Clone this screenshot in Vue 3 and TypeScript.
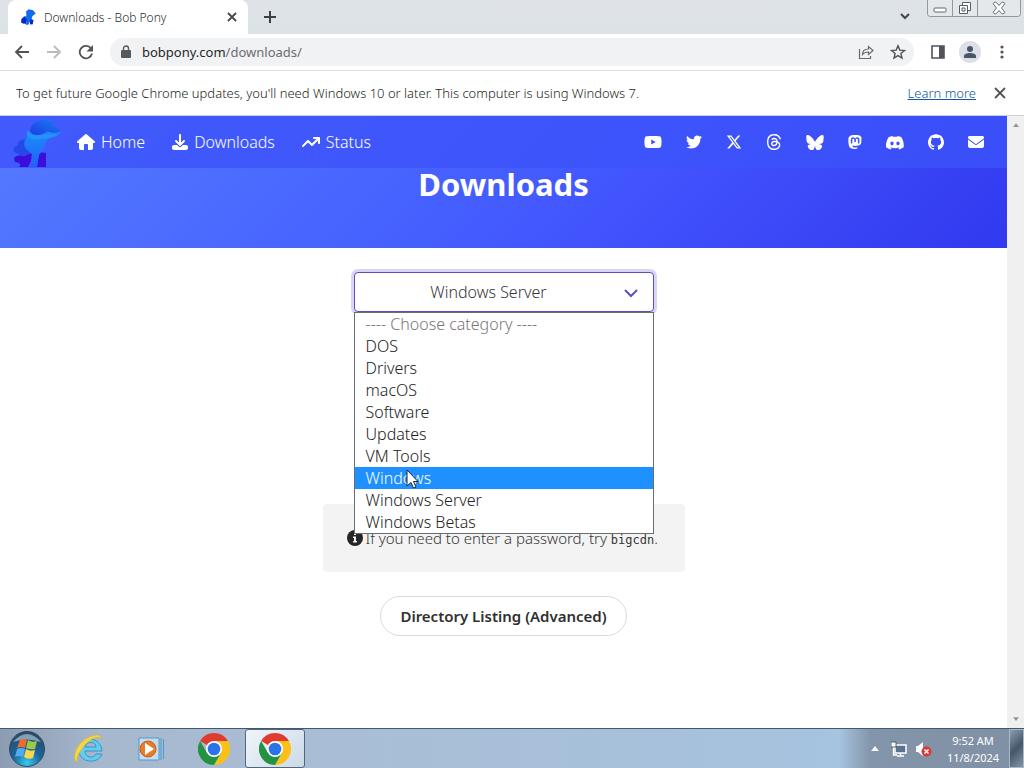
<script setup lang="ts">
import { ref } from 'vue'

interface Icon { name: string; box: string; w: number; d: string }

const navLinks: Icon[] = [
  { name: 'Home', box: '0 0 576 512', w: 18, d: 'M575.8 255.5c0 18-15 32.1-32 32.1h-32l.7 160.2c.2 35.5-28.5 64.3-64 64.3H352V352c0-17.700-14.300-32-32-32h-64c-17.700 0-32 14.300-32 32v160h-96c-35.300 0-64-28.700-64-64V287.600H32c-18 0-32-14-32-32.100 0-9 3-17 10-24L266.400 8c7-7 15-8 22-8s15 2 21 7l255.400 224.500c8 7 12 15 11 24z' },
  { name: 'Downloads', box: '0 0 512 512', w: 16, d: 'M288 32c0-17.700-14.300-32-32-32s-32 14.300-32 32v242.700l-73.400-73.400c-12.500-12.500-32.800-12.500-45.300 0s-12.500 32.800 0 45.300l128 128c12.500 12.500 32.800 12.500 45.300 0l128-128c12.500-12.500 12.500-32.800 0-45.300s-32.800-12.500-45.300 0L288 274.700V32zM64 352c-35.300 0-64 28.700-64 64v32c0 35.300 28.700 64 64 64h384c35.300 0 64-28.700 64-64v-32c0-35.300-28.700-64-64-64H346.500l-45.300 45.300c-25 25-65.500 25-90.500 0L165.500 352H64z' },
  { name: 'Status', box: '0 0 576 512', w: 18, d: 'M384 160c-17.700 0-32-14.300-32-32s14.300-32 32-32h160c17.700 0 32 14.300 32 32v160c0 17.700-14.300 32-32 32s-32-14.300-32-32v-82.700L342.600 374.600c-12.500 12.500-32.800 12.500-45.300 0L192 269.300 54.600 406.600c-12.500 12.500-32.800 12.500-45.300 0s-12.500-32.800 0-45.300l160-160c12.500-12.500 32.800-12.500 45.300 0L320 306.700 466.700 160H384z' },
]

const social: Icon[] = [
  { name: 'YouTube', box: '0 0 576 512', w: 18, d: 'M549.655 124.083c-6.281-23.650-24.787-42.276-48.284-48.597C458.781 64 288 64 288 64S117.220 64 74.629 75.486c-23.497 6.322-42.003 24.947-48.284 48.597-11.412 42.867-11.412 132.305-11.412 132.305s0 89.438 11.412 132.305c6.281 23.650 24.787 41.500 48.284 47.821C117.220 448 288 448 288 448s170.780 0 213.371-11.486c23.497-6.321 42.003-24.171 48.284-47.821 11.412-42.867 11.412-132.305 11.412-132.305s0-89.438-11.412-132.305zm-317.510 213.508V175.185l142.739 81.205-142.739 81.201z' },
  { name: 'Twitter', box: '0 0 512 512', w: 16, d: 'M459.370 151.716c.325 4.548.325 9.097.325 13.645 0 138.720-105.583 298.558-298.558 298.558-59.452 0-114.680-17.219-161.137-47.106 8.447.974 16.568 1.299 25.340 1.299 49.055 0 94.213-16.568 130.274-44.832-46.132-.975-84.792-31.188-98.112-72.772 6.498.974 12.995 1.624 19.818 1.624 9.421 0 18.843-1.300 27.614-3.573-48.081-9.747-84.143-51.980-84.143-102.985v-1.299c13.969 7.797 30.214 12.670 47.431 13.319-28.264-18.843-46.781-51.005-46.781-87.391 0-19.492 5.197-37.360 14.294-52.954 51.655 63.675 129.300 105.258 216.365 109.807-1.624-7.797-2.599-15.918-2.599-24.040 0-57.828 46.782-104.934 104.934-104.934 30.213 0 57.502 12.670 76.670 33.137 23.715-4.548 46.456-13.320 66.599-25.340-7.798 24.366-24.366 44.833-46.132 57.827 21.117-2.273 41.584-8.122 60.426-16.243-14.292 20.791-32.161 39.308-52.628 54.253z' },
  { name: 'X', box: '0 0 512 512', w: 16, d: 'M389.200 48h70.600L305.600 224.200 487 464H345L233.700 318.600 106.500 464H35.800L200.700 275.500 26.800 48H172.400L272.900 180.900 389.200 48zM364.400 421.800h39.100L151.100 88h-42L364.400 421.800z' },
  { name: 'Threads', box: '0 0 24 24', w: 16, d: 'M12.186 24h-.007c-3.581-.024-6.334-1.205-8.184-3.509C2.350 18.440 1.500 15.586 1.472 12.010v-.017c.030-3.579.879-6.430 2.525-8.482C5.845 1.205 8.600.024 12.180 0h.014c2.746.020 5.043.725 6.826 2.098 1.677 1.290 2.858 3.130 3.509 5.467l-2.040.569c-1.104-3.960-3.898-5.984-8.304-6.015-2.910.022-5.110.936-6.540 2.717C4.307 6.504 3.616 8.914 3.589 12c.027 3.086.718 5.496 2.057 7.164 1.430 1.783 3.631 2.698 6.540 2.717 2.623-.020 4.358-.631 5.800-2.045 1.647-1.613 1.618-3.593 1.090-4.798-.310-.710-.873-1.300-1.634-1.750-.192 1.352-.622 2.446-1.284 3.272-.886 1.102-2.140 1.704-3.730 1.790-1.202.065-2.361-.218-3.259-.801-1.063-.689-1.685-1.740-1.752-2.964-.065-1.190.408-2.285 1.330-3.082.880-.760 2.119-1.207 3.583-1.291a13.853 13.853 0 0 1 3.020.142c-.126-.742-.375-1.332-.750-1.757-.513-.586-1.308-.883-2.359-.890h-.029c-.844 0-1.992.232-2.721 1.320L7.734 7.847c.980-1.454 2.568-2.256 4.478-2.256h.044c3.194.020 5.097 1.975 5.287 5.388.108.046.216.094.321.142 1.490.700 2.580 1.761 3.154 3.070.797 1.820.871 4.790-1.548 7.158-1.850 1.810-4.094 2.628-7.277 2.650Zm1.003-11.690c-.242 0-.487.007-.739.021-1.836.103-2.980.946-2.916 2.143.067 1.256 1.452 1.839 2.784 1.767 1.224-.065 2.818-.543 3.086-3.710a10.500 10.500 0 0 0-2.215-.221z' },
  { name: 'Bluesky', box: '0 0 24 22', w: 18, d: 'M12 10.800c-1.087-2.114-4.046-6.053-6.798-7.995C2.566.944 1.561 1.266.902 1.565.139 1.908 0 3.080 0 3.768c0 .690.378 5.650.624 6.479.815 2.736 3.713 3.660 6.383 3.364-3.912.580-7.387 2.005-2.830 7.078 5.013 5.190 6.870-1.113 7.823-4.308.953 3.195 2.050 9.271 7.733 4.308 4.267-4.308 1.172-6.498-2.740-7.078 2.670.297 5.568-.628 6.383-3.364.246-.828.624-5.790.624-6.478 0-.690-.139-1.861-.902-2.206-.659-.298-1.664-.620-4.300 1.240C16.046 4.748 13.087 8.687 12 10.800Z' },
  { name: 'Mastodon', box: '0 0 24 24', w: 14, d: 'M23.268 5.313c-.350-2.578-2.617-4.610-5.304-5.004C17.510.242 15.792 0 11.813 0h-.030c-3.980 0-4.835.242-5.288.309C3.882.692 1.496 2.518.917 5.127.640 6.412.610 7.837.661 9.143c.074 1.874.088 3.745.260 5.611.118 1.240.325 2.470.620 3.680.550 2.237 2.777 4.098 4.960 4.857 2.336.792 4.849.923 7.256.380.265-.061.527-.132.786-.213.585-.184 1.270-.390 1.774-.753v-1.852a20.282 20.282 0 0 1-4.709.545c-2.730 0-3.463-1.284-3.674-1.818a5.593 5.593 0 0 1-.319-1.433 18.990 18.990 0 0 0 4.632.544c1.565-.012 4.500-.300 5.520-.580 2.435-.464 4.753-1.920 4.989-5.604.141-3.028.120-5.500.512-7.194zm-3.748 9.195h-2.561V8.290c0-1.309-.550-1.976-1.670-1.976-1.230 0-1.846.790-1.846 2.350v3.403h-2.546V8.663c0-1.560-.617-2.350-1.848-2.350-1.112 0-1.668.668-1.670 1.977v6.218H4.822V8.102c0-1.310.337-2.350 1.011-3.120.696-.770 1.608-1.164 2.740-1.164 1.311 0 2.302.500 2.962 1.498l.638 1.060.638-1.060c.660-.999 1.650-1.498 2.960-1.498 1.130 0 2.043.395 2.740 1.164.675.770 1.012 1.810 1.012 3.120z' },
  { name: 'Discord', box: '0 1 24 20', w: 18, d: 'M20.317 4.370a19.791 19.791 0 0 0-4.885-1.515c-.210.375-.444.865-.608 1.250a18.270 18.270 0 0 0-5.487 0c-.164-.393-.406-.875-.618-1.250A19.736 19.736 0 0 0 3.677 4.370C.533 9.046-.319 13.580.099 18.058a19.900 19.900 0 0 0 5.993 3.030c.462-.630.874-1.295 1.226-1.994a13.100 13.100 0 0 1-1.872-.892l.372-.292c3.928 1.793 8.180 1.793 12.062 0l.373.292c-.598.350-1.220.645-1.873.892.360.698.772 1.362 1.225 1.993a19.839 19.839 0 0 0 6.002-3.030c.500-5.177-.838-9.674-3.290-13.687zM8.020 15.331c-1.182 0-2.157-1.086-2.157-2.419s.956-2.419 2.157-2.419c1.210 0 2.176 1.095 2.157 2.419 0 1.333-.956 2.419-2.157 2.419zm7.975 0c-1.183 0-2.157-1.086-2.157-2.419s.955-2.419 2.157-2.419c1.210 0 2.176 1.095 2.157 2.419 0 1.333-.946 2.419-2.157 2.419z' },
  { name: 'GitHub', box: '0 0 24 24', w: 16, d: 'M12 .297c-6.630 0-12 5.373-12 12 0 5.303 3.438 9.800 8.205 11.385.600.113.820-.258.820-.577 0-.285-.010-1.040-.015-2.040-3.338.724-4.042-1.610-4.042-1.610C4.422 18.070 3.633 17.700 3.633 17.700c-1.087-.744.084-.729.084-.729 1.205.084 1.838 1.236 1.838 1.236 1.070 1.835 2.809 1.305 3.495.998.108-.776.417-1.305.760-1.605-2.665-.300-5.466-1.332-5.466-5.930 0-1.310.465-2.380 1.235-3.220-.135-.303-.540-1.523.105-3.176 0 0 1.005-.322 3.300 1.230.960-.267 1.980-.399 3-.405 1.020.006 2.040.138 3 .405 2.280-1.552 3.285-1.230 3.285-1.230.645 1.653.240 2.873.120 3.176.765.840 1.230 1.910 1.230 3.220 0 4.610-2.805 5.625-5.475 5.920.420.360.810 1.096.810 2.220 0 1.606-.015 2.896-.015 3.286 0 .315.210.690.825.570C20.565 22.092 24 17.592 24 12.297c0-6.627-5.373-12-12-12' },
  { name: 'Email', box: '0 0 512 512', w: 16, d: 'M48 64C21.500 64 0 85.500 0 112c0 15.100 7.100 29.300 19.200 38.400l217.600 163.200c11.400 8.500 27 8.500 38.400 0l217.600-163.200c12.100-9.100 19.200-23.300 19.200-38.400 0-26.500-21.500-48-48-48H48zM0 176v208c0 35.300 28.700 64 64 64h384c35.300 0 64-28.700 64-64V176L294.400 339.200c-22.800 17.100-54 17.100-76.800 0L0 176z' },
]

const categories = ['---- Choose category ----', 'DOS', 'Drivers', 'macOS', 'Software', 'Updates', 'VM Tools', 'Windows', 'Windows Server', 'Windows Betas']
const selected = ref('Windows Server')
const active = ref('Windows')
</script>

<template>
  <div class="desktop">
    <header class="tabstrip">
      <div class="tab">
        <svg class="favicon" viewBox="0 0 48 50" aria-hidden="true"><path fill="#126be8" d="M18 8 26 1 40 4 48 14 38 22 35 32 41 34 39 48H31L30 39 25 49H17L19 40 10 46 2 41 9 37 5 30 12 23 19 23Z" /><path fill="#0928cf" d="M3 31 14 25 20 33 17 47 3 43ZM31 31 41 35 38 48H30Z" /></svg>
        <span class="tab-title">Downloads - Bob Pony</span>
        <button class="plain" aria-label="Close tab"><svg width="10" height="10" viewBox="0 0 10 10"><path d="M1 1 9 9M9 1 1 9" stroke="#45484c" stroke-width="1.800" /></svg></button>
      </div>
      <button class="plain new-tab" aria-label="New tab"><svg width="14" height="14" viewBox="0 0 14 14"><path d="M7 1V13M1 7H13" stroke="#3c4043" stroke-width="2" /></svg></button>
      <button class="plain tab-search" aria-label="Search tabs"><svg width="12" height="8" viewBox="0 0 12 8"><path d="M2 1 6 5 10 1" fill="none" stroke="#43474b" stroke-width="2" /></svg></button>
      <div class="window-buttons">
        <button aria-label="Minimize"><svg width="14" height="14" viewBox="0 0 14 14"><rect x="1" y="7" width="12" height="4" rx="1" fill="#fff" stroke="#646a70" /></svg></button>
        <button aria-label="Restore"><svg width="14" height="14" viewBox="0 0 14 14"><path d="M4.500 1.500h8v8h-8z" fill="#fff" stroke="#565c62" /><path d="M1.500 4.500h8v8h-8zM4 7h3v3H4z" fill="#fff" stroke="#565c62" /></svg></button>
        <button class="close" aria-label="Close"><svg width="14" height="14" viewBox="0 0 14 14"><path d="M1 2.500 3 1 4.500 1.500 7 4.500 9.500 1.500 11 1 13 2.500 9.500 7 13 11.500 11 13 9.500 12.500 7 9.500 4.500 12.500 3 13 1 11.500 4.500 7Z" fill="#fff" stroke="#6a7076" /></svg></button>
      </div>
    </header>

    <div class="toolbar">
      <button class="plain" aria-label="Back"><svg width="16" height="16" viewBox="0 0 16 16"><path d="M15 8H2M8 2 2 8l6 6" fill="none" stroke="#505357" stroke-width="1.800" /></svg></button>
      <button class="plain" aria-label="Forward"><svg width="16" height="16" viewBox="0 0 16 16"><path d="M1 8H14M8 2l6 6-6 6" fill="none" stroke="#b9bbbe" stroke-width="1.800" /></svg></button>
      <button class="plain" aria-label="Reload"><svg width="16" height="16" viewBox="0 0 16 16"><path d="M13 4.500A6.200 6.200 0 1 0 14 9.500" fill="none" stroke="#505357" stroke-width="1.800" /><path d="M15 1v6.500H8.500Z" fill="#505357" /></svg></button>
      <div class="omnibox">
        <svg width="10" height="14" viewBox="0 0 10 14" aria-hidden="true"><path d="M2.500 6V3.500a2.500 2.500 0 0 1 5 0V6" fill="none" stroke="#55585c" stroke-width="1.400" /><rect y="5" width="10" height="8" rx="1" fill="#55585c" /></svg>
        <a class="url" href="#">bobpony.com<span>/downloads/</span></a>
        <button class="plain" aria-label="Share"><svg width="16" height="16" viewBox="0 0 16 16"><path d="M1.500 5v9.500h11V12M4.500 10.500c0-3.500 2-5.500 6-5.500V2.500L15 6.500l-4.500 4V8C8 8 6 8.500 4.500 10.500Z" fill="none" stroke="#66696d" stroke-width="1.200" /></svg></button>
        <button class="plain" aria-label="Bookmark"><svg width="16" height="16" viewBox="0 0 16 16"><path d="m8 1.800 1.800 4.300 4.700.4-3.600 3 1.100 4.600L8 11.600l-4 2.500 1.100-4.600-3.600-3 4.700-.4Z" fill="none" stroke="#505357" stroke-width="1.400" /></svg></button>
      </div>
      <button class="plain" aria-label="Side panel"><svg width="16" height="14" viewBox="0 0 16 14"><path d="M2 1h12v12H2z" fill="none" stroke="#505357" stroke-width="1.600" /><path d="M9 1h5v12H9z" fill="#505357" /></svg></button>
      <button class="plain profile" aria-label="Profile"><svg width="14" height="14" viewBox="0 0 14 14"><circle cx="7" cy="4" r="3" fill="#4c5469" /><path d="M1 13v-2c0-2 3-3 6-3s6 1 6 3v2Z" fill="#4c5469" /></svg></button>
      <button class="plain" aria-label="Menu"><svg width="4" height="14" viewBox="0 0 4 14"><g fill="#505357"><circle cx="2" cy="2" r="1.600" /><circle cx="2" cy="7" r="1.600" /><circle cx="2" cy="12" r="1.600" /></g></svg></button>
    </div>

    <div class="infobar">
      <span>To get future Google Chrome updates, you'll need Windows 10 or later. This computer is using Windows 7.</span>
      <a href="#">Learn more</a>
      <button class="plain" aria-label="Dismiss"><svg width="12" height="12" viewBox="0 0 12 12"><path d="M1 1 11 11M11 1 1 11" stroke="#505357" stroke-width="1.800" /></svg></button>
    </div>

    <div class="viewport">
      <main class="page">
        <section class="hero">
          <nav class="nav">
            <a class="logo" href="#" aria-label="Bob Pony">
              <svg viewBox="0 0 50 50" width="50" height="50">
                <defs>
                  <linearGradient id="mane" x1="0" x2="1" y1="1" y2="0"><stop offset="0" stop-color="#1a3fe4" /><stop offset="1" stop-color="#1c7cf4" /></linearGradient>
                  <linearGradient id="body" x1="0" x2="0" y1="0" y2="1"><stop offset="0" stop-color="#1c8ef8" /><stop offset="1" stop-color="#1d62f6" /></linearGradient>
                </defs>
                <path fill="#2448ea" d="M14 22Q5 23 6 28 0 30 2 35L9 38 18 38 22 30Z" />
                <path fill="#3a0fdc" d="M2 41Q5 37 12 39L20 36 19 44 16 50H7Q11 46 3 45ZM27 35 34 36 34 50H25Z" />
                <path fill="url(#body)" d="M15 14Q24 20 35 15L49 15Q46 20 39 20 34 22 33 27 31 34 27 38L25 50H19L21 38 15 33Q9 28 15 20Z" />
                <path fill="url(#mane)" d="M18 13Q20 6 27 4 36 0 42 4L41 9Q46 11 49 14 42 18 36 14 28 20 20 17Z" />
                <path fill="#2b9dff" opacity=".5" d="M15 13Q20 20 30 18 37 17 46 18 38 22 30 22 20 24 15 19Z" />
              </svg>
            </a>
            <a v-for="l in navLinks" :key="l.name" class="nav-link" href="#">
              <svg :width="l.w" height="16" :viewBox="l.box" aria-hidden="true"><path :d="l.d" fill="currentColor" /></svg>{{ l.name }}
            </a>
            <div class="social">
              <a v-for="s in social" :key="s.name" href="#" :aria-label="s.name">
                <svg :width="s.w" height="16" :viewBox="s.box"><path :d="s.d" fill="currentColor" /></svg>
              </a>
            </div>
          </nav>
          <h1>Downloads</h1>
        </section>

        <section class="content">
          <div class="picker">
            <select v-model="selected" aria-label="Category">
              <option v-for="c in categories" :key="c">{{ c }}</option>
            </select>
            <svg class="chevron" width="14" height="10" viewBox="0 0 14 10" aria-hidden="true"><path d="M1 2 7 8 13 2" fill="none" stroke="#5a50c0" stroke-width="2" /></svg>
            <ul class="options" role="listbox" aria-label="Category choices">
              <li v-for="(c, i) in categories" :key="c" role="option" :aria-selected="c === selected" :class="{ active: c === active, muted: i === 0 }" @click="selected = c" @mouseenter="active = c">
                {{ c }}
                <svg v-if="c === 'Windows'" class="cursor" width="13" height="20" viewBox="0 0 13 20" aria-hidden="true"><path d="M1 1V17L5 13.500 7.500 19 10 18 7.500 12.500H12Z" fill="#fff" stroke="#1b2733" /></svg>
              </li>
            </ul>
          </div>
          <p class="note">
            <svg width="16" height="16" viewBox="0 0 16 16" aria-hidden="true"><circle cx="8" cy="8" r="8" fill="#262626" /><path d="M7 3h2v2H7zM6 6.500h3V11h1v1.500H6V11h1V8H6z" fill="#f4f4f4" /></svg>
            <span>If you need to enter a password, try <code>bigcdn</code>.</span>
          </p>
          <a class="directory" href="#">Directory Listing (Advanced)</a>
        </section>
      </main>
      <div class="scrollbar" aria-hidden="true">
        <svg width="6" height="4" viewBox="0 0 8 5"><path d="M0 5 4 0 8 5Z" fill="#969696" /></svg>
        <svg width="6" height="4" viewBox="0 0 8 5"><path d="M0 0 4 5 8 0Z" fill="#969696" /></svg>
      </div>
    </div>

    <footer class="taskbar">
      <button class="task" aria-label="Start">
        <svg width="38" height="38" viewBox="0 0 38 38">
          <defs>
            <radialGradient id="orb" cx=".5" cy=".9" r=".9"><stop offset="0" stop-color="#35cbee" /><stop offset=".45" stop-color="#1a659a" /><stop offset="1" stop-color="#284866" /></radialGradient>
          </defs>
          <circle cx="19" cy="19" r="17.500" fill="url(#orb)" stroke="#344b63" />
          <path d="M5 12Q19-4 33 12 19 7 5 12Z" fill="#fff" opacity=".45" />
          <path d="M12 10Q15 8 19 10L17 18Q13 16 9 18Z" fill="#f06a2d" />
          <path d="M20 10Q24 13 29 11L27 19Q22 20 18 18Z" fill="#9acb43" />
          <path d="M9 19Q13 17 17 19L15 27Q11 25 7 27Z" fill="#55a9ed" />
          <path d="M18 19Q22 22 27 20L25 28Q20 30 16 27Z" fill="#ffd550" />
        </svg>
      </button>
      <button class="task" aria-label="Internet Explorer">
        <svg width="34" height="34" viewBox="0 0 34 34">
          <path d="M30 19H13c0 7 9 8 11 3h6c-3 10-22 10-23-3C7 4 29 3 30 19ZM13 15h11c0-6-10-6-11 0Z" fill="#62cdf2" stroke="#2689bd" stroke-width=".8" fill-rule="evenodd" />
          <path d="M30 7C29-1 12 4 5 16 1 24 2 30 6 30 4 27 6 23 10 17 15 9 26 2 30 7Z" fill="#f3d647" stroke="#d3af2b" stroke-width=".6" />
        </svg>
      </button>
      <button class="task" aria-label="Media Player">
        <svg width="28" height="26" viewBox="0 0 28 26">
          <path d="M2 2H22V24H2Z" fill="#c4ddf1" stroke="#4e9bc8" />
          <path d="M24 2V24M26.500 3V23" stroke="#4e9bc8" />
          <circle cx="11" cy="13" r="8" fill="#ea7b27" stroke="#ca5f20" /><path d="M8 7 17 13 8 19Z" fill="#fff" />
        </svg>
      </button>
      <button v-for="n in 2" :key="n" class="task" :class="{ running: n === 2 }" :aria-label="n === 1 ? 'Google Chrome' : 'Downloads - Bob Pony'">
        <svg width="32" height="32" viewBox="0 0 48 48">
          <path d="M24 24 3.215 12A24 24 0 0 1 44.785 12L44.780 12H24Z" fill="#df3b30" />
          <path d="M24 12H44.785A24 24 0 0 1 24 48L34.392 30Z" fill="#fbc116" />
          <path d="M34.392 30 24 48A24 24 0 0 1 3.215 12L13.608 30Z" fill="#229342" />
          <circle cx="24" cy="24" r="12" fill="#fff" /><circle cx="24" cy="24" r="9.500" fill="#2b73e8" />
        </svg>
      </button>
      <div class="tray">
        <button class="plain" aria-label="Show hidden icons"><svg width="8" height="5" viewBox="0 0 8 5"><path d="M0 5 4 0 8 5Z" fill="#f4f7fa" /></svg></button>
        <button class="plain" aria-label="Network"><svg width="16" height="16" viewBox="0 0 16 16"><path d="M4 4H15V12H4Z" fill="#58738b" stroke="#fff" stroke-width="1.500" /><path d="M6 15H13M9.500 12V15M2.500 6V14H6" stroke="#fff" stroke-width="1.300" fill="none" /><path d="M0 1H5V6H0Z" fill="#fff" stroke="#31475b" stroke-width=".8" /></svg></button>
        <button class="plain" aria-label="Volume muted"><svg width="17" height="16" viewBox="0 0 17 16"><path d="M1 5H3L8 1V15L3 11H1Z" fill="#fff" /><circle cx="11.500" cy="10.500" r="5" fill="#d83a34" /><path d="M9.500 8.500 13.500 12.500M13.500 8.500 9.500 12.500" stroke="#fff" stroke-width="1.500" /></svg></button>
        <time>9:52 AM<br />11/8/2024</time>
        <button class="show-desktop" aria-label="Show desktop"></button>
      </div>
    </footer>
  </div>
</template>

<style>
body { margin: 0; }
</style>

<style scoped>
* { box-sizing: border-box; }
.desktop { display: flex; flex-direction: column; height: 100vh; overflow: hidden; background: #fff; font-family: "Noto Sans", sans-serif; font-size: 12px; color: #2c2e31; }
button { font: inherit; color: inherit; }
.plain { display: flex; align-items: center; justify-content: center; flex: none; padding: 0; border: 0; background: none; }

.tabstrip { display: flex; height: 34px; flex: none; background: linear-gradient(#dfe3e9, #dbe3e6); padding-left: 8px; }
.tab { display: flex; align-items: center; gap: 8px; width: 240px; height: 34px; padding: 0 11px 0 12px; border-radius: 8px 8px 0 0; background: #fff; }
.favicon { width: 16px; height: 16px; }
.tab-title { flex: 1; font-weight: 300; }
.new-tab { width: 44px; }
.tab-search { width: 28px; margin-left: auto; margin-right: 8px; }
.window-buttons { display: flex; height: 17px; margin-right: 3px; border: 1px solid #92989e; border-top: 0; border-radius: 0 0 4px 4px; overflow: hidden; }
.window-buttons button { display: flex; align-items: center; justify-content: center; width: 25px; padding: 0; border: 0; border-right: 1px solid #92989e; background: #e4e8eb; }
.window-buttons .close { width: 42px; border-right: 0; }

.toolbar { display: flex; align-items: center; gap: 16px; height: 37px; flex: none; padding: 0 20px 0 14px; border-bottom: 1px solid #dedede; background: #fff; }
.omnibox { display: flex; align-items: center; flex: 1; height: 28px; gap: 16px; padding: 0 8px 0 11px; border-radius: 14px; background: #f1f2f3; }
.omnibox > svg { margin-right: -5px; }
.url { flex: 1; font-size: 13px; color: #26282b; text-decoration: none; }
.url span { color: #6b6e72; }
.profile { width: 22px; height: 22px; margin: 0 3px 0 -3px; border-radius: 50%; background: #dcdfe8; }

.infobar { display: flex; align-items: center; flex: none; height: 45px; padding: 0 18px 0 16px; border-bottom: 1px solid #cfd0d4; font-size: 13px; font-weight: 300; color: #1d1f21; white-space: nowrap; }
.infobar a { margin-left: auto; margin-right: 18px; color: #1058a0; }

.viewport { display: flex; flex: 1; min-height: 0; }
.page { flex: 1; min-width: 0; color: #363636; font-size: 16px; font-weight: 300; }
.hero { height: 132px; background: linear-gradient(135deg, #557bff 0%, #4764ff 40%, #4152fd 65%, #3239ef 100%); color: #fff; text-align: center; }
.nav { display: flex; align-items: center; height: 52px; padding: 0 23px 0 12px; background: rgba(60, 83, 250, 0.8); }
.nav a { display: flex; align-items: center; color: #fff; text-decoration: none; }
.logo { margin-right: 15px; }
.nav .nav-link { gap: 6px; margin-right: 27px; }
.social { display: flex; gap: 24px; margin-left: auto; }
h1 { margin: 0; font-size: 31px; line-height: 32px; font-weight: 700; }

.content { display: flex; flex-direction: column; align-items: center; padding-top: 24px; }
.picker { position: relative; width: 300px; }
select { display: block; width: 100%; height: 40px; padding: 0 42px 0 12px; appearance: none; text-align: center; text-align-last: center; border: 1px solid #5a50c0; border-radius: 4px; outline: 0; box-shadow: 0 0 0 3px #d9d6f5; background: #fff; color: #363636; font: inherit; }
.chevron { position: absolute; right: 16px; top: 16px; pointer-events: none; }
.options { position: absolute; top: 40px; left: 0; right: 0; z-index: 2; margin: 0; padding: 0; list-style: none; border: 1px solid #666d73; background: #fff; }
.options li { position: relative; height: 22px; padding-left: 11px; line-height: 23px; color: #222; }
.options .muted { color: #777; }
.options .active { background: #1e90ff; color: #fff; }
.cursor { position: absolute; left: 51px; top: 2px; }
.note { display: flex; gap: 3px; width: 362px; height: 68px; margin: 192px 0 24px; padding: 22px 24px; border-radius: 4px; background: #f3f3f3; font-size: 15px; line-height: 24px; white-space: nowrap; }
.note svg { flex: none; margin-top: 4px; }
code { font-family: "DejaVu Sans Mono", monospace; font-size: 12px; }
.directory { display: flex; align-items: center; height: 40px; padding: 0 19px; border: 1px solid #dbdbdb; border-radius: 20px; color: #303030; font-size: 15px; font-weight: 600; text-decoration: none; }

.scrollbar { display: flex; flex-direction: column; align-items: center; justify-content: space-between; width: 17px; padding: 7px 0; background: #f0f0f0; }

.taskbar { display: flex; align-items: center; flex: none; height: 40px; border-top: 1px solid #44576b; background: linear-gradient(90deg, #8c9cb2 0, #a6b8cd 100px, #a9bdd5 300px, #a6c3df 82%, #8395aa 85%, #8090a5 100%); }
.task { display: flex; align-items: center; justify-content: center; width: 60px; height: 39px; padding: 0; border: 0; background: none; }
.task:first-child { width: 54px; margin-right: 5px; }
.task:nth-child(3), .task:nth-child(4) { width: 63px; }
.task.running { border: 1px solid #53677c; border-radius: 3px; background: linear-gradient(135deg, #f1f5fa, #cbd9e8); }
.tray { display: flex; align-items: center; height: 100%; margin-left: auto; gap: 8px; color: #fff; }
.tray > :first-child { margin-right: 4px; }
time { width: 64px; margin-left: 1px; text-align: center; font-size: 11px; line-height: 17px; }
.show-desktop { width: 15px; height: 100%; margin-left: -4px; padding: 0; border: 1px solid #aab8c7; background: linear-gradient(135deg, #8c9db0, #45586b 50%, #8395a7); }
</style>
